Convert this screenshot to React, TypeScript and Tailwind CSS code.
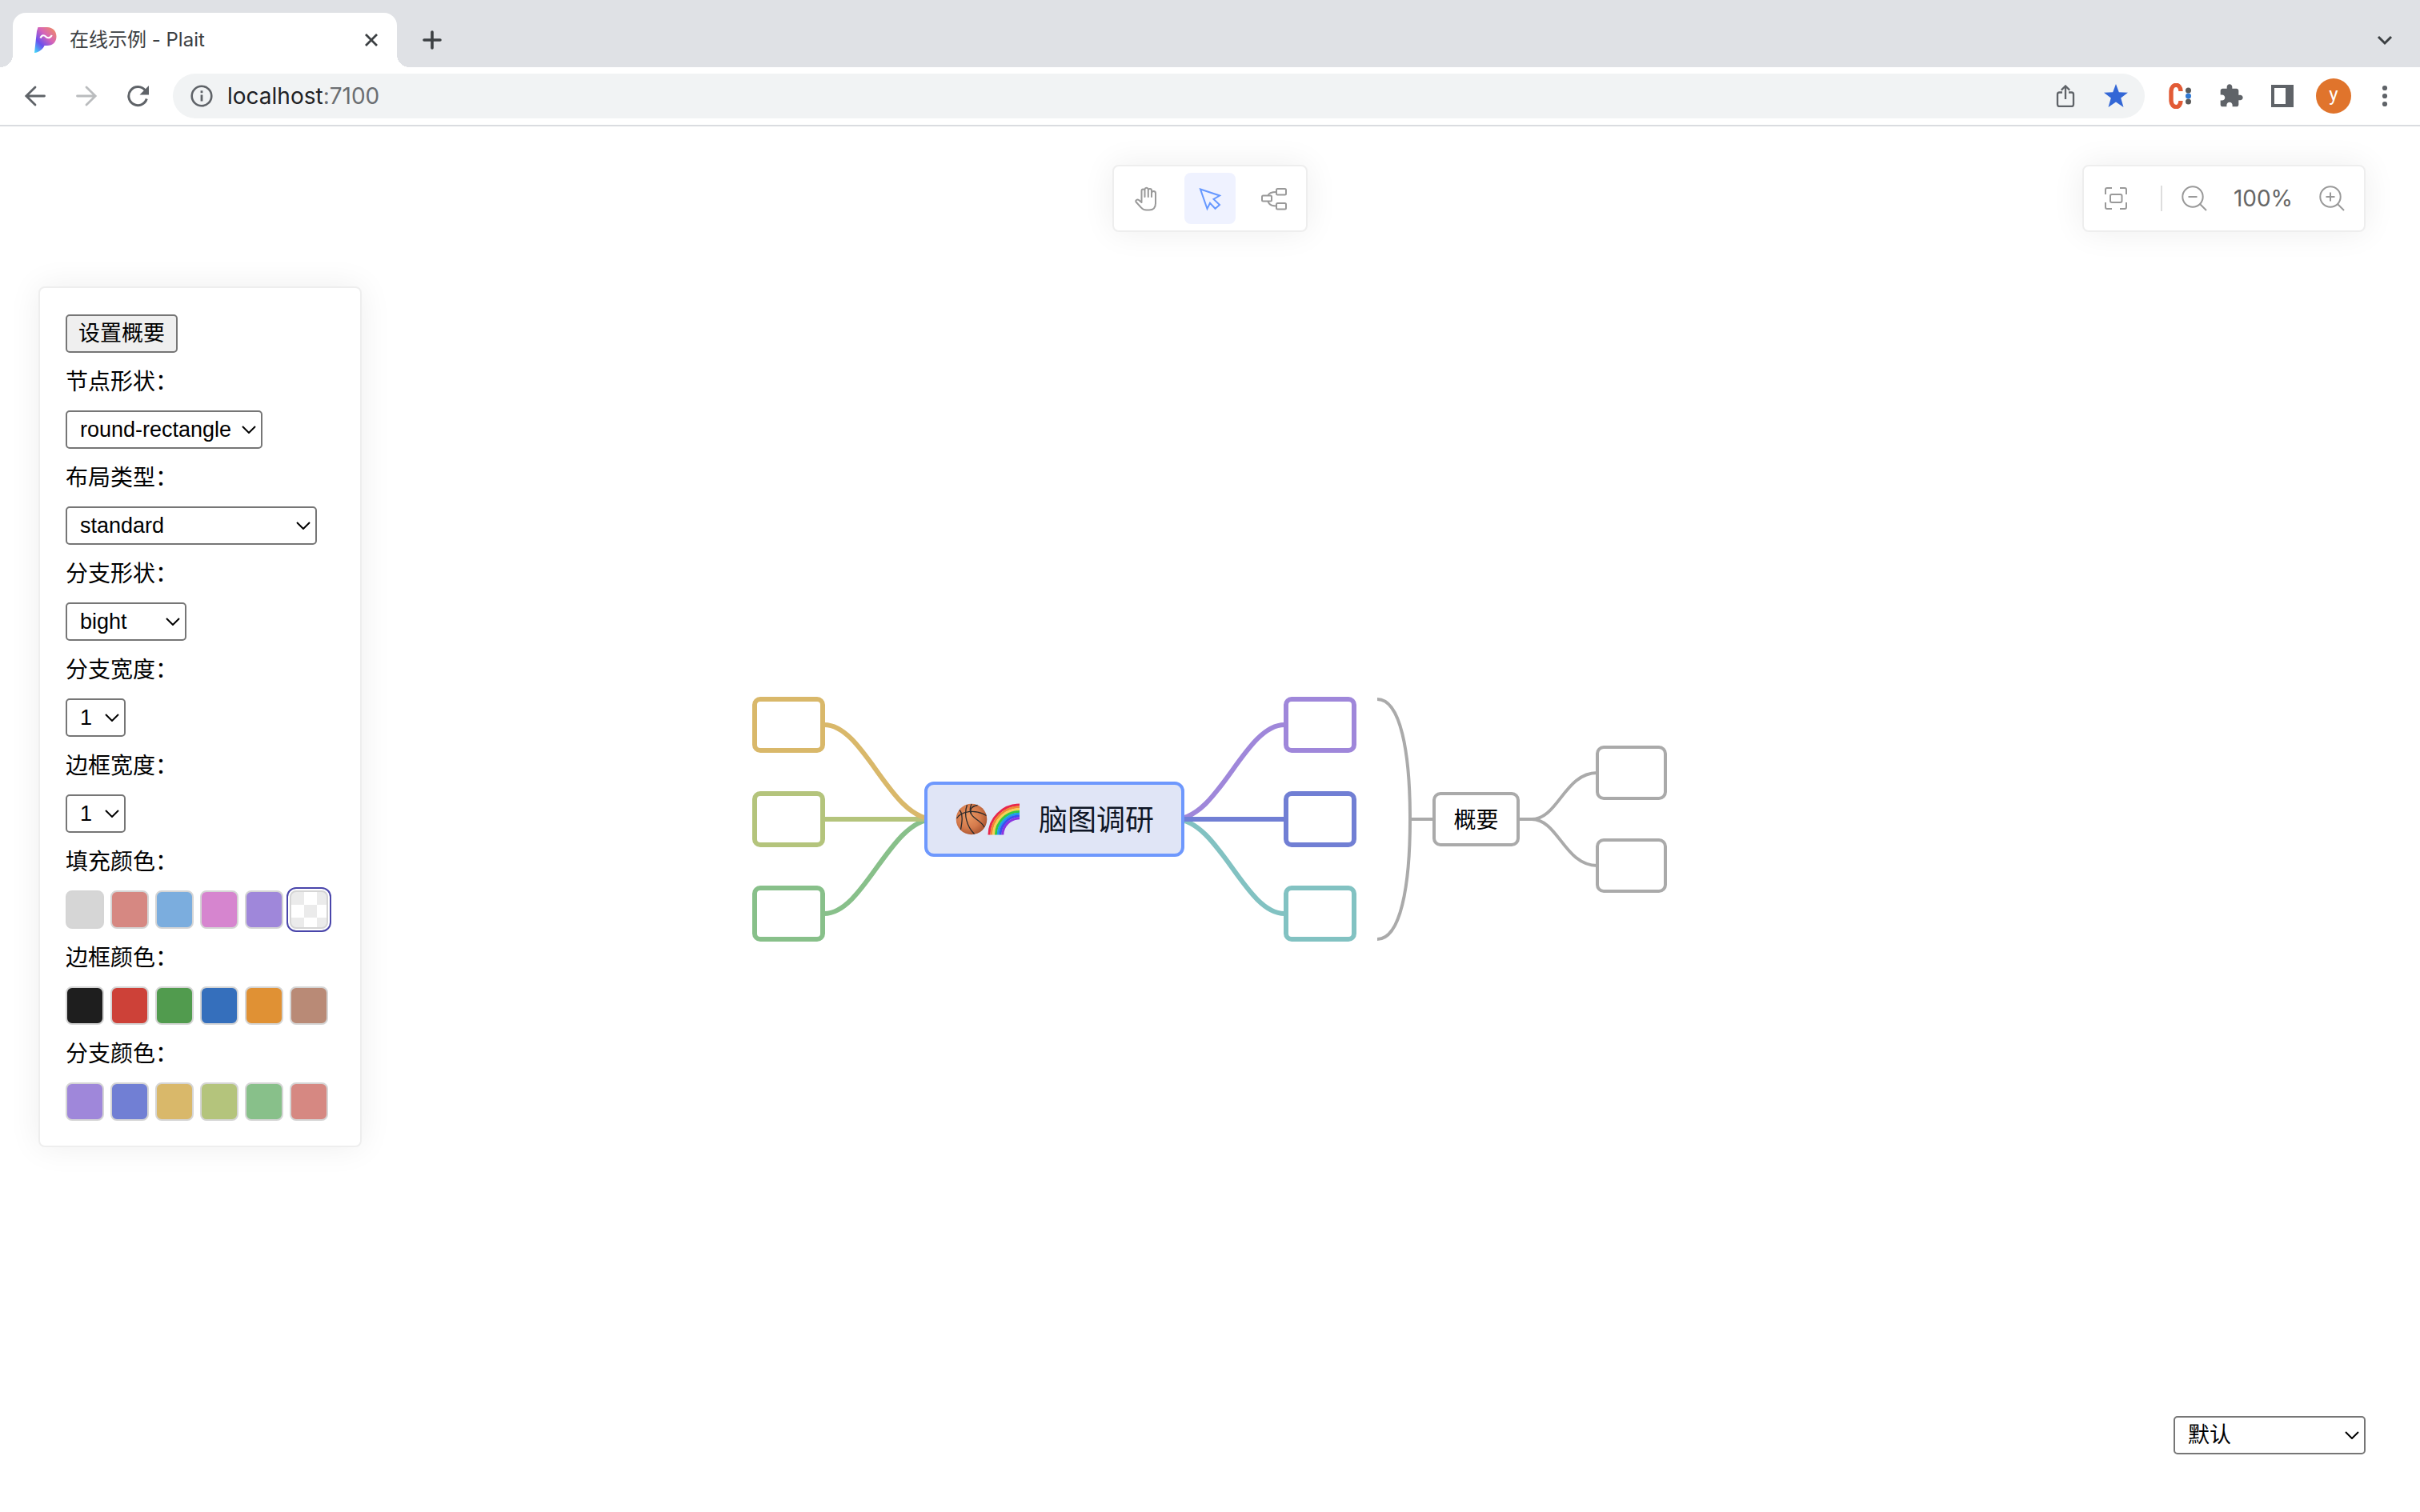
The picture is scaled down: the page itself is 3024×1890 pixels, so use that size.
import React from "react";

type IconProps = { className?: string };

const sans = "font-[Inter,'Noto_Sans_CJK_SC',sans-serif]";
const arial = "font-['Liberation_Sans','Noto_Sans_CJK_SC',sans-serif]";

function Favicon() {
  return (
    <svg className="h-8 w-7 shrink-0" viewBox="0 0 28 32" aria-hidden="true">
      <defs>
        <linearGradient id="fav" x1="0.9" y1="0.05" x2="0.05" y2="1">
          <stop offset="0" stopColor="#ee8a68" />
          <stop offset="0.35" stopColor="#d664b8" />
          <stop offset="0.68" stopColor="#6a50ee" />
          <stop offset="1" stopColor="#40d8f8" />
        </linearGradient>
      </defs>
      <path d="M4.500 0H16C23 0 27.500 5 27.500 11.500C27.500 18.500 23 23 16 23H12.500C11 27 6 31.500 0 32L3 5Z" fill="url(#fav)" />
      <path d="M7.500 13.500C9.500 8.800 12.500 10 14.500 12C17 14.200 20 13.500 21.800 10" fill="none" stroke="#fff" strokeWidth="2.200" />
    </svg>
  );
}

function CloseIcon() {
  return (
    <svg className="size-4" viewBox="0 0 16 16" fill="none" stroke="#3c4043" strokeWidth="2.800" aria-hidden="true">
      <path d="M1 1L15 15M15 1L1 15" />
    </svg>
  );
}

function PlusIcon() {
  return (
    <svg className="size-6" viewBox="0 0 24 24" fill="none" stroke="#3c4043" strokeWidth="3.600" strokeLinecap="round" aria-hidden="true">
      <path d="M12 2V22M2 12H22" />
    </svg>
  );
}

function ArrowIcon({ className }: IconProps) {
  return (
    <svg className={className} viewBox="0 0 28 28" fill="none" stroke="currentColor" strokeWidth="2.800" strokeLinecap="round" aria-hidden="true">
      <path d="M25.500 14H3M14 3L2.800 14L14 25" />
    </svg>
  );
}

function ReloadIcon() {
  return (
    <svg className="size-7" viewBox="0 0 28 28" aria-hidden="true">
      <path d="M23.500 7.200A11.500 11.500 0 1 0 25.300 17.500" fill="none" stroke="#5f6368" strokeWidth="3" />
      <path d="M28 1V12.500H16.500Z" fill="#5f6368" />
    </svg>
  );
}

function InfoIcon() {
  return (
    <svg className="size-7 shrink-0" viewBox="0 0 28 28" aria-hidden="true">
      <circle cx="14" cy="14" r="12.300" fill="none" stroke="#5f6368" strokeWidth="2.600" />
      <rect x="12.600" y="12.500" width="2.800" height="8" fill="#5f6368" />
      <rect x="12.600" y="7.300" width="2.800" height="2.900" fill="#5f6368" />
    </svg>
  );
}

function ShareIcon() {
  return (
    <svg className="h-7 w-6" viewBox="0 0 24 28" fill="none" stroke="#5f6368" strokeWidth="2.300" aria-hidden="true">
      <path d="M12 18V2M6.800 6.600L12 1.500L17.200 6.600M8 9.500H4.500A2.500 2.500 0 0 0 2 12V24.500A2.500 2.500 0 0 0 4.500 27H19.500A2.500 2.500 0 0 0 22 24.500V12A2.500 2.500 0 0 0 19.500 9.500H16" />
    </svg>
  );
}

function StarIcon() {
  return (
    <svg className="size-[30px]" viewBox="0 0 30 30" aria-hidden="true">
      <path d="M15 0L18.800 10.300L30 10.700L21.200 17.500L24.500 29L15 22.500L5.500 29L8.800 17.500L0 10.700L11.200 10.300Z" fill="#3367d6" />
    </svg>
  );
}

function ExtensionLogo() {
  return (
    <svg className="h-8 w-7" viewBox="0 0 28 32" aria-hidden="true">
      <path d="M15 10C15 -0.500 3.500 0 3 10V22C3.500 32 15 32.500 15 22" fill="none" stroke="#e25b36" strokeWidth="5.400" />
      <circle cx="24.500" cy="9" r="3.500" fill="#5a5a5a" />
      <circle cx="24.500" cy="23" r="3.500" fill="#5a5a5a" />
      <circle cx="24.500" cy="16" r="3.500" fill="#3279d2" />
    </svg>
  );
}

function PuzzleIcon() {
  return (
    <svg className="size-8" viewBox="0 0 24 24" fill="#5f6368" aria-hidden="true">
      <path d="M20.500 11H19V7c0-1.100-.9-2-2-2h-4V3.500C13 2.120 11.880 1 10.500 1S8 2.120 8 3.500V5H4c-1.100 0-1.990.9-1.990 2v3.800H3.500c1.490 0 2.700 1.210 2.700 2.700s-1.210 2.700-2.700 2.700H2V20c0 1.100.9 2 2 2h3.800v-1.500c0-1.490 1.210-2.700 2.700-2.700 1.490 0 2.700 1.210 2.700 2.700V22H17c1.100 0 2-.9 2-2v-4h1.500c1.380 0 2.500-1.120 2.500-2.500S21.880 11 20.500 11z" />
    </svg>
  );
}

function SidePanelIcon() {
  return (
    <svg className="size-7" viewBox="0 0 28 28" aria-hidden="true">
      <path d="M0 0H28V28H0ZM4 4V24H18V4Z" fill="#5f6368" fillRule="evenodd" />
    </svg>
  );
}

function DotsIcon() {
  return (
    <svg className="h-7 w-2" viewBox="0 0 8 28" fill="#5f6368" aria-hidden="true">
      <circle cx="4" cy="4" r="3.100" />
      <circle cx="4" cy="14" r="3.100" />
      <circle cx="4" cy="24" r="3.100" />
    </svg>
  );
}

function HandIcon() {
  return (
    <svg className="size-8" viewBox="0 0 32 32" fill="none" stroke="#999" strokeWidth="2" strokeLinejoin="round" strokeLinecap="round" aria-hidden="true">
      <path d="M10.500 20V6.500A2 2 0 0 1 14.500 6.500V14M14.500 6V4.500A2.200 2.200 0 0 1 18.800 4.500V14M18.800 6A2 2 0 0 1 23 6V14M23 9.500A2.200 2.200 0 0 1 28 9.500V22C28 28 25 30.500 20 30.500H16.500C13 30.500 11.500 29.500 9.500 27L3.600 20.500C2.500 18.500 5 16.500 7 18L10.500 21" />
    </svg>
  );
}

function PointerIcon() {
  return (
    <svg className="size-8" viewBox="0 0 32 32" fill="none" stroke="#6698ff" strokeWidth="2" aria-hidden="true">
      <path d="M4 4.500L28 12.500L20.500 17L28 24L22.500 28.800L16 21.800L12.500 29Z" />
    </svg>
  );
}

function MindIcon() {
  return (
    <svg className="size-8" viewBox="0 0 32 32" fill="none" stroke="#999" strokeWidth="2" aria-hidden="true">
      <rect x="1" y="12.500" width="12" height="7" rx="1.500" />
      <rect x="19" y="4" width="12" height="7.500" rx="1.500" />
      <rect x="19" y="22" width="12" height="7.500" rx="1.500" />
      <path d="M8.500 12.500C9.500 9 12.500 8 19 8M8.500 19.500C9.500 24 12.500 25.500 19 25.500" />
    </svg>
  );
}

function FitIcon() {
  return (
    <svg className="size-7" viewBox="0 0 28 28" fill="none" stroke="#999" strokeWidth="2" aria-hidden="true">
      <path d="M1 9V3A2 2 0 0 1 3 1H9M19 1H25A2 2 0 0 1 27 3V9M27 19V25A2 2 0 0 1 25 27H19M9 27H3A2 2 0 0 1 1 25V19" />
      <rect x="7" y="9" width="14.500" height="10" rx="2" />
    </svg>
  );
}

function ZoomIcon({ plus }: { plus?: boolean }) {
  return (
    <svg className="size-8" viewBox="0 0 32 32" fill="none" stroke="#999" strokeWidth="2" aria-hidden="true">
      <circle cx="14" cy="14" r="12.700" />
      <path d="M8.500 14H19.500" />
      {plus ? <path d="M14 8.500V19.500" /> : null}
      <path d="M23 23L31 31" />
    </svg>
  );
}

function Chevron({ className }: IconProps) {
  return (
    <svg className={className} viewBox="0 0 18 10" fill="none" stroke="currentColor" aria-hidden="true">
      <path d="M1 1L9 9L17 1" />
    </svg>
  );
}

function Basketball() {
  return (
    <svg className="size-10" viewBox="0 0 40 40" role="img" aria-label="篮球">
      <defs>
        <radialGradient id="ball" cx="0.4" cy="0.4" r="0.65">
          <stop offset="0" stopColor="#ea9862" />
          <stop offset="0.6" stopColor="#d47a4c" />
          <stop offset="1" stopColor="#a9532f" />
        </radialGradient>
      </defs>
      <circle cx="20" cy="20" r="19.300" fill="url(#ball)" />
      <g fill="none" stroke="#2b2a2c" strokeWidth="1.300">
        <path d="M1.500 19C7 10 24 7 38.500 15.500" />
        <path d="M14.500 2C10 14 14 29 23.500 38.500" />
        <path d="M20 1C16 10 19 15 26 20C31 23.500 34.500 26.500 36 30" />
        <path d="M27.500 2.500C19.500 4 17.500 8 19.500 13" />
        <path d="M5 8.500C10 14 8 25 6.500 33" />
      </g>
    </svg>
  );
}

function Rainbow() {
  const bands = ["#e8274b", "#f08a34", "#f7d154", "#35c93f", "#1fa0e8", "#3a4ff0", "#8a35e0"];
  return (
    <svg className="size-10" viewBox="0 0 40 40" role="img" aria-label="彩虹">
      {bands.map((color, i) => {
        const r = 38 - i * 2.8;
        return <path key={color} d={`M${40 - r} 39.500A${r} ${r} 0 0 1 40 ${40 - r}`} fill="none" stroke={color} strokeWidth="3" />;
      })}
    </svg>
  );
}

function BrowserChrome() {
  return (
    <header className={`${sans} border-b-2 border-[#dadce0] bg-white`}>
      <div className="flex h-[84px] items-end bg-[#dfe1e5]">
        <div className="size-4 bg-[radial-gradient(circle_at_0_0,#dfe1e5_16px,#fff_16px)]" />
        <div className="flex h-[68px] w-[480px] items-center rounded-t-2xl bg-white pr-6 pl-[27px]">
          <Favicon />
          <span className="ml-4 flex-1 text-2xl text-[#3c4043]">在线示例 - Plait</span>
          <button type="button" aria-label="关闭标签页"><CloseIcon /></button>
        </div>
        <div className="size-4 bg-[radial-gradient(circle_at_100%_0,#dfe1e5_16px,#fff_16px)]" />
        <button type="button" aria-label="新标签页" className="ml-4 flex h-[68px] items-center"><PlusIcon /></button>
        <button type="button" aria-label="搜索标签页" className="mr-[35px] ml-auto flex h-[68px] items-center text-[#3c4043]">
          <Chevron className="h-[10px] w-[18px] overflow-visible stroke-3" />
        </button>
      </div>
      <div className="flex h-[72px] items-center pr-10 pl-[30px]">
        <button type="button" aria-label="后退" className="text-[#5f6368]"><ArrowIcon className="size-7" /></button>
        <button type="button" aria-label="前进" className="ml-9 text-[#babcbe]"><ArrowIcon className="size-7 rotate-180" /></button>
        <button type="button" aria-label="重新加载" className="ml-9"><ReloadIcon /></button>
        <div className="ml-[30px] flex h-14 flex-1 items-center rounded-full bg-[#f1f3f4] pr-[21px] pl-[22px]">
          <InfoIcon />
          <span className="ml-[18px] flex-1 text-[28px] text-[#202124]">localhost<span className="text-[#6b6e72]">:7100</span></span>
          <button type="button" aria-label="分享"><ShareIcon /></button>
          <button type="button" aria-label="收藏" className="ml-9"><StarIcon /></button>
        </div>
        <button type="button" aria-label="扩展" className="ml-[30px]"><ExtensionLogo /></button>
        <button type="button" aria-label="扩展程序" className="ml-[34px]"><PuzzleIcon /></button>
        <button type="button" aria-label="侧边栏" className="ml-[34px]"><SidePanelIcon /></button>
        <button type="button" className="ml-7 flex size-11 items-center justify-center rounded-full bg-[#e0742c] pb-1 font-[Roboto,sans-serif] text-2xl text-white">y</button>
        <button type="button" aria-label="菜单" className="ml-[38px]"><DotsIcon /></button>
      </div>
    </header>
  );
}

const card = "rounded-lg border-2 border-[#eee] bg-white shadow-[0_0_40px_rgba(0,0,0,0.07)]";

function ToolButton({ label, active, children }: { label: string; active?: boolean; children: React.ReactNode }) {
  return (
    <button
      type="button"
      aria-label={label}
      className={active ? "flex size-16 items-center justify-center rounded-lg bg-[#eff2ff]" : "flex size-16 items-center justify-center rounded-lg"}
    >
      {children}
    </button>
  );
}

function Picker({ label, value, width }: { label: string; value: string; width: string }) {
  return (
    <div className={`relative h-12 text-black ${width}`}>
      <select
        aria-label={label}
        defaultValue={value}
        className={`${arial} size-full appearance-none rounded-[5px] border-2 border-[#767676] bg-white pl-4 text-[27px] leading-[44px]`}
      >
        <option>{value}</option>
      </select>
      <Chevron className="pointer-events-none absolute top-[19px] right-2 h-[10px] w-[18px] stroke-2" />
    </div>
  );
}

function Label({ children }: { children: React.ReactNode }) {
  return <div className="h-12 text-[28px] leading-[50px]">{children}</div>;
}

type Swatch = { name: string; fill: string; selected?: boolean };

const fills: Swatch[] = [
  { name: "灰", fill: "bg-[#d6d6d6]" },
  { name: "红", fill: "bg-[#d68882]" },
  { name: "蓝", fill: "bg-[#7badde]" },
  { name: "粉", fill: "bg-[#d685cf]" },
  { name: "紫", fill: "bg-[#9f87da]" },
  { name: "透明", fill: "bg-[conic-gradient(#fff_25%,#ebebeb_0_50%,#fff_0_75%,#ebebeb_0)] bg-[length:32px_32px]", selected: true },
];
const strokes: Swatch[] = [
  { name: "黑", fill: "bg-[#1e1e1e]" },
  { name: "红", fill: "bg-[#cd4138]" },
  { name: "绿", fill: "bg-[#519b4e]" },
  { name: "蓝", fill: "bg-[#356fbc]" },
  { name: "橙", fill: "bg-[#e09134]" },
  { name: "棕", fill: "bg-[#b98a76]" },
];
const branches: Swatch[] = [
  { name: "紫", fill: "bg-[#9f87da]" },
  { name: "蓝", fill: "bg-[#717fd4]" },
  { name: "黄", fill: "bg-[#d9b86a]" },
  { name: "橄榄", fill: "bg-[#b4c47c]" },
  { name: "绿", fill: "bg-[#88c08a]" },
  { name: "红", fill: "bg-[#d68882]" },
];

function Swatches({ items }: { items: Swatch[] }) {
  return (
    <div className="flex gap-2">
      {items.map((s) => (
        <button
          key={s.name}
          type="button"
          aria-label={s.name}
          className={`size-12 rounded-lg border-2 border-[#d5d5d5] ${s.fill} ${s.selected ? "outline-2 outline-offset-2 outline-[#4945aa]" : ""}`}
        />
      ))}
    </div>
  );
}

function SettingsPanel() {
  return (
    <aside className={`${card} ${arial} flex w-[404px] flex-col items-start gap-3 px-8 pt-[33px] pb-[31px] text-black`}>
      <button type="button" className="h-12 rounded-[5px] border-2 border-[#767676] bg-[#efefef] px-[14px] text-[27px] leading-[44px]">设置概要</button>
      <Label>节点形状：</Label>
      <Picker label="节点形状" value="round-rectangle" width="w-[246px]" />
      <Label>布局类型：</Label>
      <Picker label="布局类型" value="standard" width="w-[314px]" />
      <Label>分支形状：</Label>
      <Picker label="分支形状" value="bight" width="w-[151px]" />
      <Label>分支宽度：</Label>
      <Picker label="分支宽度" value="1" width="w-[75px]" />
      <Label>边框宽度：</Label>
      <Picker label="边框宽度" value="1" width="w-[75px]" />
      <Label>填充颜色：</Label>
      <Swatches items={fills} />
      <Label>边框颜色：</Label>
      <Swatches items={strokes} />
      <Label>分支颜色：</Label>
      <Swatches items={branches} />
    </aside>
  );
}

const nodes = [
  "left-0 top-0 h-[70px] w-[91px] border-6 border-[#d9b86a]",
  "left-0 top-[118px] h-[70px] w-[91px] border-6 border-[#b4c47c]",
  "left-0 top-[236px] h-[70px] w-[91px] border-6 border-[#88c08a]",
  "left-[664px] top-0 h-[70px] w-[91px] border-6 border-[#9f87da]",
  "left-[664px] top-[118px] h-[70px] w-[91px] border-6 border-[#717fd4]",
  "left-[664px] top-[236px] h-[70px] w-[91px] border-6 border-[#82c2c2]",
  "left-[1054px] top-[61px] h-[68px] w-[89px] border-4 border-[#aaa]",
  "left-[1054px] top-[177px] h-[68px] w-[89px] border-4 border-[#aaa]",
];

function MindMap() {
  return (
    <div className="absolute top-[713px] left-[940px] h-[306px] w-[1143px]">
      <svg className="absolute inset-0 size-full" viewBox="0 0 1143 306" fill="none" aria-hidden="true">
        <g strokeWidth="6">
          <path d="M90 271C140 271 172 153 227 153" stroke="#88c08a" />
          <path d="M90 153H227" stroke="#b4c47c" />
          <path d="M90 35C140 35 172 153 227 153" stroke="#d9b86a" />
          <path d="M665 271C615 271 583 153 528 153" stroke="#82c2c2" />
          <path d="M665 35C615 35 583 153 528 153" stroke="#9f87da" />
          <path d="M665 153H528" stroke="#717fd4" />
        </g>
        <g stroke="#aaa" strokeWidth="4">
          <path d="M781 3C810 3 822 69 822 153C822 237 810 303 781 303" />
          <path d="M822 153H851M958 153H975" />
          <path d="M974 153C1007 153 1015 95 1056 95M974 153C1007 153 1015 211 1056 211" />
        </g>
      </svg>
      {nodes.map((n) => (
        <div key={n} className={`absolute rounded-[10px] bg-white ${n}`} />
      ))}
      <div className={`${sans} absolute top-[106px] left-[215px] flex h-[94px] w-[325px] items-center rounded-[12px] border-4 border-[#6e98fd] bg-[#e0e5f6] pl-[35px] text-4xl text-[#0f1626]`}>
        <Basketball />
        <Rainbow />
        <span className="ml-6 pt-[2px]">脑图调研</span>
      </div>
      <div className={`${sans} absolute top-[119px] left-[850px] flex h-[68px] w-[109px] items-center justify-center rounded-[10px] border-4 border-[#aaa] bg-white pt-[2px] text-[28px] text-black`}>概要</div>
    </div>
  );
}

export default function App() {
  return (
    <div className="flex min-h-screen flex-col bg-white">
      <BrowserChrome />
      <main className="relative flex flex-1 flex-col pt-12 pr-[68px] pb-[72px] pl-12">
        <MindMap />
        <div className="grid grid-cols-[1fr_auto_1fr]">
          <div className={`${card} col-start-2 ml-5 flex gap-4 p-2`}>
            <ToolButton label="移动"><HandIcon /></ToolButton>
            <ToolButton label="选择" active><PointerIcon /></ToolButton>
            <ToolButton label="脑图"><MindIcon /></ToolButton>
          </div>
          <div className={`${card} ${sans} flex items-center justify-self-end p-2 text-[28px] text-[#666]`}>
            <ToolButton label="适应画布"><FitIcon /></ToolButton>
            <div className="mr-2 ml-6 h-8 w-[2px] bg-[#ddd]" />
            <ToolButton label="缩小"><ZoomIcon /></ToolButton>
            <span className="w-[108px] text-center">100%</span>
            <ToolButton label="放大"><ZoomIcon plus /></ToolButton>
          </div>
        </div>
        <div className="mt-[68px]"><SettingsPanel /></div>
        <div className="mt-auto self-end"><Picker label="主题" value="默认" width="w-[240px]" /></div>
      </main>
    </div>
  );
}
